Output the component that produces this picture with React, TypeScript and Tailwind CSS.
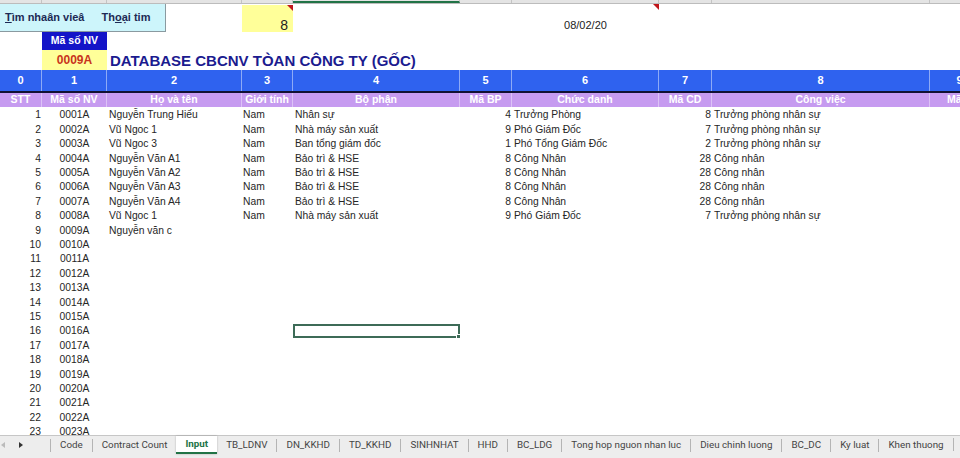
import React from "react";

const colW = [
  "w-[42px]",
  "w-[65px]",
  "w-[135px]",
  "w-[51px]",
  "w-[167px]",
  "w-[52px]",
  "w-[147px]",
  "w-[53px]",
  "w-[218px]",
  "w-[60px]",
];

const headers = [
  "STT",
  "Mã số NV",
  "Họ và tên",
  "Giới tính",
  "Bộ phận",
  "Mã BP",
  "Chức danh",
  "Mã CD",
  "Công việc",
  "Mã C",
];

type Row = {
  name?: string;
  sex?: string;
  dept?: string;
  deptId?: string;
  title?: string;
  titleId?: string;
  job?: string;
};

const people: Row[] = [
  { name: "Nguyễn Trung Hiếu", sex: "Nam", dept: "Nhân sự", deptId: "4", title: "Trưởng Phòng", titleId: "8", job: "Trưởng phòng nhân sự" },
  { name: "Vũ Ngoc 1", sex: "Nam", dept: "Nhà máy sản xuất", deptId: "9", title: "Phó Giám Đốc", titleId: "7", job: "Trưởng phòng nhân sự" },
  { name: "Vũ Ngoc 3", sex: "Nam", dept: "Ban tổng giám đốc", deptId: "1", title: "Phó Tổng Giám Đốc", titleId: "2", job: "Trưởng phòng nhân sự" },
  { name: "Nguyễn Văn A1", sex: "Nam", dept: "Bảo trì & HSE", deptId: "8", title: "Công Nhân", titleId: "28", job: "Công nhân" },
  { name: "Nguyễn Văn A2", sex: "Nam", dept: "Bảo trì & HSE", deptId: "8", title: "Công Nhân", titleId: "28", job: "Công nhân" },
  { name: "Nguyễn Văn A3", sex: "Nam", dept: "Bảo trì & HSE", deptId: "8", title: "Công Nhân", titleId: "28", job: "Công nhân" },
  { name: "Nguyễn Văn A4", sex: "Nam", dept: "Bảo trì & HSE", deptId: "8", title: "Công Nhân", titleId: "28", job: "Công nhân" },
  { name: "Vũ Ngoc 1", sex: "Nam", dept: "Nhà máy sản xuất", deptId: "9", title: "Phó Giám Đốc", titleId: "7", job: "Trưởng phòng nhân sự" },
  { name: "Nguyễn văn c" },
];

const tabs = [
  "Code",
  "Contract Count",
  "Input",
  "TB_LDNV",
  "DN_KKHD",
  "TD_KKHD",
  "SINHNHAT",
  "HHD",
  "BC_LDG",
  "Tong hop nguon nhan luc",
  "Dieu chinh luong",
  "BC_DC",
  "Ky luat",
  "Khen thuong",
];

function CommentMark() {
  return (
    <span className="absolute right-0 top-0 w-0 h-0 border-l-[6px] border-l-transparent border-t-[6px] border-t-[#c0161b]" />
  );
}

export default function App() {
  const rows = Array.from({ length: 23 }, (_, i) => ({
    stt: i + 1,
    id: String(i + 1).padStart(4, "0") + "A",
    ...(people[i] ?? {}),
  }));

  return (
    <div className="w-[960px] h-[458px] overflow-hidden bg-white flex flex-col font-['Liberation_Sans',Arial,sans-serif] text-[#222]">
      {/* column header strip (cut off) */}
      <div className="h-[4px] shrink-0 flex bg-[#e4e4e4] border-b border-[#bcbcbc]">
        {colW.map((w, i) => (
          <div
            key={i}
            className={`${w} shrink-0 border-r border-[#c4c4c4] ${i === 4 ? "border-b-2 border-b-[#217346]" : ""}`}
          />
        ))}
      </div>

      {/* row: search button, counter, date */}
      <div className="h-[28px] shrink-0 flex">
        <div className="w-[166px] shrink-0 bg-[#cdf5fb] border-r border-b border-[#8a9aa0] flex items-center gap-[17px] pl-[5px] text-[11px] font-bold text-[#1d2a55]">
          <span>
            <span className="underline">T</span>ìm nhaân vieâ
          </span>
          <span>
            Th<span className="underline">o</span>ại tim
          </span>
        </div>
        <div className="w-[76px] shrink-0" />
        <div className="relative w-[51px] shrink-0 mt-[1px] bg-[#ffff99] flex items-end justify-end pr-[5px] pb-0 text-[14px] leading-none">
          8
          <CommentMark />
        </div>
        <div className="w-[219px] shrink-0" />
        <div className="relative w-[147px] shrink-0 flex items-end justify-center pb-[1px] text-[11px] leading-none">
          08/02/20
          <CommentMark />
        </div>
      </div>

      {/* Mã số NV label */}
      <div className="h-[18px] shrink-0 flex">
        <div className="w-[42px] shrink-0" />
        <div className="w-[65px] shrink-0 bg-[#1414c8] text-white font-bold text-[10.5px] flex items-center justify-center">
          Mã số NV
        </div>
      </div>

      {/* current id + title */}
      <div className="h-[20px] shrink-0 flex">
        <div className="w-[42px] shrink-0" />
        <div className="w-[65px] shrink-0 bg-[#ffff99] text-[#c8341c] font-bold text-[12px] flex items-center justify-center">
          0009A
        </div>
        <div className="pl-[3px] pt-[2px] flex items-center text-[15px] font-bold text-[#1b1b8f] whitespace-nowrap">
          DATABASE CBCNV TÒAN CÔNG TY (GỐC)
        </div>
      </div>

      {/* numbered header */}
      <div className="h-[21px] shrink-0 flex bg-[#2f62ef]">
        {colW.map((w, i) => (
          <div
            key={i}
            className={`${w} shrink-0 border-r border-[#8eaaf6] flex items-center justify-center text-white font-bold text-[11px]`}
          >
            {i}
          </div>
        ))}
      </div>
      <div className="h-[2px] shrink-0 bg-[#111133]" />

      {/* field header */}
      <div className="h-[14px] shrink-0 flex bg-[#c69bf0]">
        {colW.map((w, i) => (
          <div
            key={i}
            className={`${w} shrink-0 border-r border-[#dcc2f6] flex items-center justify-center text-white font-bold text-[10.5px] whitespace-nowrap overflow-hidden`}
          >
            {headers[i]}
          </div>
        ))}
      </div>

      {/* data */}
      <div className="flex-1 overflow-hidden pt-[1px] text-[10.3px] text-[#262626]">
        {rows.map((r) => (
          <div key={r.stt} className="h-[14.4px] flex items-center whitespace-nowrap">
            <div className="w-[42px] shrink-0 text-right pr-[1px]">{r.stt}</div>
            <div className="w-[65px] shrink-0 text-center">{r.id}</div>
            <div className="w-[135px] shrink-0 pl-[2px]">{r.name}</div>
            <div className="w-[51px] shrink-0 pl-[1px]">{r.sex}</div>
            <div
              className={`w-[167px] shrink-0 pl-[2px] h-full flex items-center ${
                r.stt === 16 ? "relative border-2 border-[#3d6b57]" : ""
              }`}
            >
              {r.dept}
              {r.stt === 16 && (
                <span className="absolute -right-[3px] -bottom-[3px] w-[5px] h-[5px] bg-[#3d6b57] border border-white" />
              )}
            </div>
            <div className="w-[52px] shrink-0 text-right pr-[1px]">{r.deptId}</div>
            <div className="w-[147px] shrink-0 pl-[2px]">{r.title}</div>
            <div className="w-[53px] shrink-0 text-right pr-[1px]">{r.titleId}</div>
            <div className="w-[218px] shrink-0 pl-[2px]">{r.job}</div>
          </div>
        ))}
      </div>

      {/* sheet tabs */}
      <div className="h-[23px] shrink-0 flex items-start bg-[#ededed] border-t border-[#c6c6c6] font-['Roboto',Arial,sans-serif] text-[9.8px] text-[#444] whitespace-nowrap">
        <div className="w-[50px] shrink-0 h-[18px] flex items-center">
          <span className="ml-[1px] w-0 h-0 border-y-[3px] border-y-transparent border-r-[4px] border-r-[#bbb]" />
          <span className="ml-[14px] w-0 h-0 border-y-[3px] border-y-transparent border-l-[4px] border-l-[#333]" />
        </div>
        {tabs.map((t, i) => {
          const active = t === "Input";
          const prevActive = tabs[i - 1] === "Input";
          return (
            <div key={t} className="flex items-center h-[18px]">
              {!active && !prevActive && <span className="w-px h-[13px] bg-[#b4b4b4]" />}
              <div
                className={
                  active
                    ? "h-[18px] px-[9px] flex items-center bg-white text-[#217346] font-bold border-b-2 border-[#217346] shadow-[0_0_2px_rgba(0,0,0,0.25)]"
                    : "h-[18px] px-[9px] flex items-center"
                }
              >
                {t}
              </div>
            </div>
          );
        })}
        <span className="mt-[2px] w-px h-[13px] bg-[#b4b4b4]" />
      </div>
    </div>
  );
}
